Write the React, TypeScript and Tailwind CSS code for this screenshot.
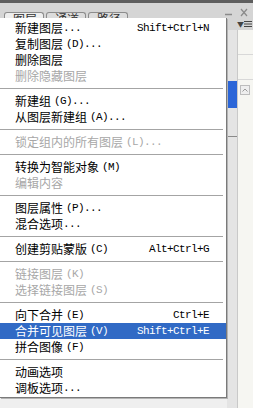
type Item =
  | { sep: true }
  | { label: string; suffix?: string; keys?: string; disabled?: boolean; active?: boolean };

const items: Item[] = [
  { label: "新建图层", suffix: "...", keys: "Shift+Ctrl+N" },
  { label: "复制图层", suffix: "(D)..." },
  { label: "删除图层" },
  { label: "删除隐藏图层", disabled: true },
  { sep: true },
  { label: "新建组", suffix: "(G)..." },
  { label: "从图层新建组", suffix: "(A)..." },
  { sep: true },
  { label: "锁定组内的所有图层", suffix: "(L)...", disabled: true },
  { sep: true },
  { label: "转换为智能对象", suffix: "(M)" },
  { label: "编辑内容", disabled: true },
  { sep: true },
  { label: "图层属性", suffix: "(P)..." },
  { label: "混合选项", suffix: "..." },
  { sep: true },
  { label: "创建剪贴蒙版", suffix: "(C)", keys: "Alt+Ctrl+G" },
  { sep: true },
  { label: "链接图层", suffix: "(K)", disabled: true },
  { label: "选择链接图层", suffix: "(S)", disabled: true },
  { sep: true },
  { label: "向下合并", suffix: "(E)", keys: "Ctrl+E" },
  { label: "合并可见图层", suffix: "(V)", keys: "Shift+Ctrl+E", active: true },
  { label: "拼合图像", suffix: "(F)" },
  { sep: true },
  { label: "动画选项" },
  { label: "调板选项", suffix: "..." },
];

function Tab({ label, active }: { label: string; active?: boolean }) {
  return (
    <div
      className={`h-[12px] w-[40px] shrink-0 rounded-t-[3px] border border-b-0 border-[#8c8c8c] pl-[8px] text-[12px] leading-[12px] text-[#333] ${
        active ? "bg-[#eeeeee]" : "bg-[#dcdcdc]"
      }`}
    >
      {label}
    </div>
  );
}

function Header() {
  return (
    <div className="flex h-[15px] shrink-0 items-start overflow-hidden bg-[#d5d5d5]">
      <div className="mt-[9px] flex gap-[2px] pl-[4px]">
        <Tab label="图层" active />
        <Tab label="通道" />
        <Tab label="路径" />
      </div>
      <div className="ml-auto flex items-center gap-[8px] pr-[5px] pt-[5px]">
        <svg width="7" height="9" viewBox="0 0 7 9">
          <path d="M0 6.5h7" stroke="#8a8a8a" strokeWidth="1.5" />
        </svg>
        <svg width="8" height="9" viewBox="0 0 8 9">
          <path d="M1 1l6 7M7 1L1 8" stroke="#8a8a8a" strokeWidth="1.2" />
        </svg>
      </div>
    </div>
  );
}

function PanelSide() {
  return (
    <div className="flex flex-1 flex-col">
      <div className="flex h-[12px] shrink-0 bg-[#d5d5d5]">
        <div className="w-[10px] shrink-0" />
        <div className="flex flex-1 items-center justify-end pr-[3px]">
          <span className="text-[7px] leading-[7px] text-[#444]">▼</span>
          <svg width="8" height="8" viewBox="0 0 8 8">
            <path d="M0 1.5h8M0 4h8M0 6.5h8" stroke="#444" strokeWidth="1" />
          </svg>
        </div>
      </div>
      <div className="flex flex-1">
        <div className="flex w-[10px] shrink-0 flex-col bg-[#e4e4e4]">
          <div className="h-[51px] shrink-0" />
          <div className="h-[27px] shrink-0 bg-[#2c66d8]" />
          <div className="h-[28px] shrink-0" />
          <div className="h-px shrink-0 bg-[#8a8a8a]" />
        </div>
        <div className="flex flex-1 flex-col border-l border-[#c9c9c9] bg-[#f6f6f2]">
          <div className="h-[25px] shrink-0 border-b border-[#d8d8d8]" />
          <div className="h-[25px] shrink-0 border-b border-[#d8d8d8]" />
          <div className="mt-[5px] ml-[2px] flex h-[10px] w-[10px] items-center justify-center border border-[#bdbdbd] bg-[#eeeeee]">
            <svg width="6" height="4" viewBox="0 0 6 4">
              <path d="M0.5 3.5L3 1l2.5 2.5" stroke="#9a9a9a" fill="none" />
            </svg>
          </div>
        </div>
      </div>
    </div>
  );
}

function MenuRow({ item }: { item: Exclude<Item, { sep: true }> }) {
  const color = item.active ? "bg-[#316ac5] text-white" : item.disabled ? "text-[#a7a7a7]" : "text-black";
  return (
    <div className={`flex h-[16px] items-center justify-between pl-[15px] pr-[17px] ${color}`}>
      <span className="flex items-center whitespace-nowrap">
        <span className="text-[12px] leading-[16px]">{item.label}</span>
        {item.suffix && (
          <span
            className={`font-['Liberation_Mono',monospace] text-[11px] leading-[16px] tracking-[-0.6px] ${
              item.suffix.startsWith("(") ? "ml-[3px]" : ""
            }`}
          >
            {item.suffix}
          </span>
        )}
      </span>
      {item.keys && (
        <span className="font-['Liberation_Mono',monospace] text-[11px] leading-[16px] tracking-[-0.6px]">
          {item.keys}
        </span>
      )}
    </div>
  );
}

function LayerMenu() {
  return (
    <div className="absolute left-0 top-[18px] w-[227px] border-b border-r border-[#7a7a7a] bg-white pb-px pt-[2px] shadow-[1px_1px_0_#b4b4b4]">
      {items.map((item, i) =>
        "sep" in item ? (
          <div key={i} className="flex h-[9px] items-center pr-[3px]">
            <div className="h-px w-full bg-[#a4a4a4]" />
          </div>
        ) : (
          <MenuRow key={i} item={item} />
        )
      )}
    </div>
  );
}

export default function App() {
  return (
    <div className="relative flex h-[408px] w-[253px] flex-col overflow-hidden bg-[#ececec] font-['Noto_Sans_CJK_SC',sans-serif]">
      <div className="h-[3px] shrink-0 bg-[#5e5e5e]" />
      <Header />
      <div className="flex flex-1">
        <div className="w-[227px] shrink-0 bg-[#efefef]" />
        <PanelSide />
      </div>
      <LayerMenu />
    </div>
  );
}
